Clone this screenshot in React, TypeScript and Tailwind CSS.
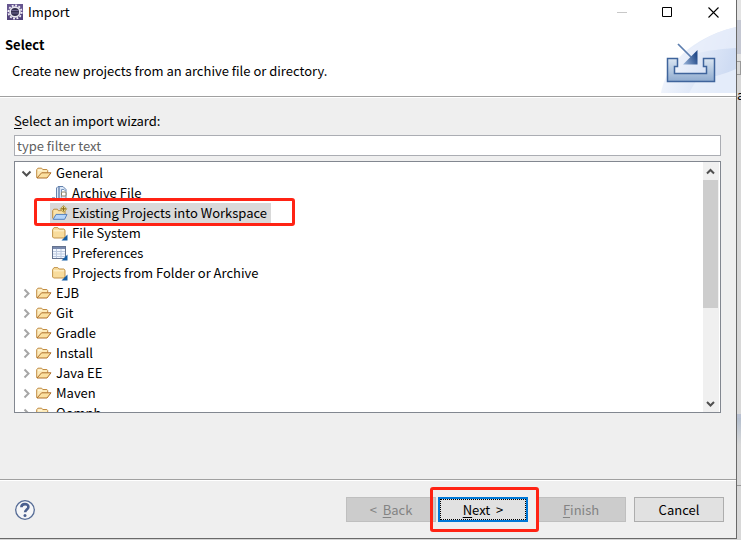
import { useState } from "react";
import type { ReactNode } from "react";

function EclipseIcon() {
  return (
    <svg width="16" height="16" viewBox="0 0 16 16" aria-hidden="true">
      <rect width="16" height="16" fill="#65558f" />
      <path d="M0 10h16v6H0z" fill="#52437a" />
      <circle cx="8" cy="8" r="6.6" fill="none" stroke="#f2f0f6" strokeWidth="1.8" strokeDasharray="1.9 1.55" />
      <circle cx="8" cy="8" r="4.9" fill="#35304f" stroke="#e8e6ee" strokeWidth="1.7" />
      <path d="M4.3 6.5h7.4M4.3 9h7.4" stroke="#6f6791" />
    </svg>
  );
}

function OpenFolderIcon() {
  return (
    <svg width="16" height="16" viewBox="0 0 16 16" aria-hidden="true">
      <path d="M.7 12.8V4.7l1.2-1.5h3.8l1 1.3h4.2l.8 1v2.3" fill="#fdeab9" stroke="#c08c42" />
      <path d="M1 13 5.6 7.8h9.4L11 13Z" fill="#fbe0a0" stroke="#b0702a" strokeLinejoin="round" />
      <path d="M2 5.2h4.2" stroke="#fff9e4" />
    </svg>
  );
}

function CornerMark() {
  return <path d="M15.5 9.5v6h-6z" fill="#165fa5" />;
}

function FolderIcon() {
  return (
    <svg width="16" height="16" viewBox="0 0 16 16" aria-hidden="true">
      <path d="M.6 12V4.5L2 2.6h3.8L7.2 4h4.6L13 5.2V12l-1 1H1.6Z" fill="#f8dc9d" stroke="#c2934a" />
      <path d="M1.5 5.8h10.6" stroke="#fff4d3" />
      <CornerMark />
    </svg>
  );
}

function PreferencesIcon() {
  return (
    <svg width="16" height="16" viewBox="0 0 16 16" aria-hidden="true">
      <rect x=".5" y="1.5" width="13" height="12" fill="#f3f8ff" stroke="#65738f" />
      <path d="M1 2h12v2H1z" fill="#7889ad" />
      <path d="M1 6.5h12M1 9h12M1 11.5h12M4.5 4v9M9 4v9" stroke="#bcc9df" />
      <CornerMark />
    </svg>
  );
}

function ArchiveIcon() {
  return (
    <svg width="16" height="16" viewBox="0 0 16 16" aria-hidden="true">
      <path d="M0 12.5h3v2H0z" fill="#165fa5" />
      <path d="M4.5 13.5V3L6 1.5h5l3 3v9z" fill="#dce8f7" stroke="#6482ad" />
      <path d="M7 2v11.5" stroke="#6482ad" strokeWidth="1.4" />
      <path d="M9.5 12.5v-8H12l1.5 1.5" fill="#fff" stroke="#7895bd" />
      <rect x="9.5" y="7" width="4.5" height="4" rx="1" fill="#fff" stroke="#8a8064" />
      <path d="M4 14.5h10" stroke="#9eb1cb" />
    </svg>
  );
}

function ImportProjectIcon() {
  return (
    <svg width="16" height="16" viewBox="0 0 16 16" aria-hidden="true">
      <path d="M.7 13.5V5.7l1.1-1.5h3.6l1 1.5H13V9" fill="#fbe3a9" stroke="#bd8a3e" />
      <path d="M1.2 14.3 4 9.4h11L12.6 14.3Z" fill="#b5d5fa" stroke="#5380be" strokeLinejoin="round" />
      <path d="M11.5.4 15 3.9l-3.5 3.5L8 3.9Z" fill="#fff3a6" stroke="#a58b3c" strokeWidth=".7" />
      <path d="M11.5 1.4v5M9 3.9h5" stroke="#8a6b1c" strokeWidth="1.3" />
    </svg>
  );
}

function ChevronIcon({ kind }: { kind: "open" | "closed" | "up" | "down" }) {
  const paths = {
    open: "M1.5 3.5l4 4 4-4",
    closed: "M3.5 1.5l4 4-4 4",
    up: "M2 7.5 5.5 4 9 7.5",
    down: "M2 4l3.5 3.5L9 4",
  };
  return (
    <svg width="11" height="11" viewBox="0 0 11 11" aria-hidden="true">
      <path d={paths[kind]} fill="none" stroke={kind === "closed" ? "#a6a6a6" : "#505050"} strokeWidth="2" />
    </svg>
  );
}

function WizardBanner() {
  return (
    <svg width="75" height="66" viewBox="0 0 75 66" className="block" aria-hidden="true">
      <defs>
        <linearGradient id="sky" x1="0" y1="0" x2="1" y2="0.3">
          <stop offset="0" stopColor="#fbfcff" />
          <stop offset="1" stopColor="#cfdcf3" />
        </linearGradient>
        <linearGradient id="tray" x1="0" y1="0" x2="0" y2="1">
          <stop offset="0" stopColor="#dbe6f2" />
          <stop offset="1" stopColor="#8fabcf" />
        </linearGradient>
        <linearGradient id="arrow" x1="0" y1="1" x2="1" y2="0.6">
          <stop offset="0" stopColor="#9db8dc" />
          <stop offset="1" stopColor="#254c8b" />
        </linearGradient>
      </defs>
      <path d="M0 66C3 48 18 14 75 0v66Z" fill="url(#sky)" />
      <path d="M22 30Q48 22 75 21V0Q43 7 22 30Z" fill="#e9effb" opacity=".75" />
      <path d="M35 54Q62 48 75 42v24H28Z" fill="#edf2fc" opacity=".7" />
      <path d="M6.5 31.5h10v8h-3v7h32v-7h-3v-8h11v23h-47Z" fill="url(#tray)" stroke="#3f649c" strokeWidth="1.5" />
      <path d="m17 17 14 14" stroke="#5c7eae" strokeWidth="1.7" />
      <path d="M36.5 23v14.5H22Z" fill="url(#arrow)" />
    </svg>
  );
}

function HelpIcon() {
  return (
    <svg width="20" height="20" viewBox="0 0 20 20" aria-hidden="true">
      <circle cx="10" cy="10" r="9.3" fill="#f5f6f8" stroke="#566c96" strokeWidth="1.3" />
      <path d="M6.4 7.3C6.4 3.2 13.4 3.1 13.4 6.9c0 2.5-3.3 2.6-3.3 5.4" fill="none" stroke="#4a5f8e" strokeWidth="2.6" />
      <circle cx="10" cy="15.4" r="1.5" fill="#4a5f8e" />
    </svg>
  );
}

const generalItems = [
  { name: "Archive File", icon: <ArchiveIcon /> },
  { name: "Existing Projects into Workspace", icon: <ImportProjectIcon />, marked: true },
  { name: "File System", icon: <FolderIcon /> },
  { name: "Preferences", icon: <PreferencesIcon /> },
  { name: "Projects from Folder or Archive", icon: <FolderIcon /> },
];

const categories = ["EJB", "Git", "Gradle", "Install", "Java EE", "Maven", "Oomph"];

function CategoryRow({ name, open }: { name: string; open?: boolean }) {
  return (
    <button type="button" aria-expanded={!!open} className="flex h-5 w-full items-center pl-1.5 text-left">
      <span className="flex w-[15px] items-center"><ChevronIcon kind={open ? "open" : "closed"} /></span>
      <OpenFolderIcon />
      <span className="pl-1">{name}</span>
    </button>
  );
}

function DialogButton({ children, disabled, focused }: { children: ReactNode; disabled?: boolean; focused?: boolean }) {
  return (
    <button
      type="button"
      disabled={disabled}
      className={
        "flex h-[25px] w-[90px] items-center justify-center " +
        (disabled
          ? "border border-[#bfbfbf] bg-[#cccccc] text-[#838383]"
          : focused
            ? "border-2 border-[#0078d7] bg-[#e1e1e1] outline-1 -outline-offset-3 outline-dotted outline-black"
            : "border border-[#adadad] bg-[#e1e1e1]")
      }
    >
      <span className="whitespace-pre">{children}</span>
    </button>
  );
}

export default function App() {
  const [selected, setSelected] = useState("Existing Projects into Workspace");
  const [filter, setFilter] = useState("");

  return (
    <div className="flex h-screen bg-[#d6d6d6] font-['Noto_Sans_CJK_SC','Noto_Sans',sans-serif] text-[13px] leading-5 text-black">
      <main className="mb-px flex min-w-0 flex-1 flex-col border-r border-b border-[#696969] bg-[#efefef]">
        <header className="border-b border-[#a0a0a0] bg-white">
          <div className="flex h-[27px] items-start justify-between">
            <h1 className="flex items-center gap-[5px] pt-0.5 pl-[7px]">
              <EclipseIcon />
              Import
            </h1>
            <div className="flex">
              <button type="button" aria-label="Minimize" disabled className="flex h-6 w-[46px] items-center justify-center">
                <svg width="11" height="11" viewBox="0 0 11 11"><path d="M0 5.5h10" stroke="#c8c8c8" /></svg>
              </button>
              <button type="button" aria-label="Maximize" className="flex h-6 w-[45px] items-center justify-center">
                <svg width="11" height="11" viewBox="0 0 11 11"><path d="M.5.5h9v9h-9z" fill="none" stroke="#000" /></svg>
              </button>
              <button type="button" aria-label="Close" className="flex h-6 w-[46px] items-center justify-center">
                <svg width="11" height="11" viewBox="0 0 11 11"><path d="m.5.5 10 10m0-10-10 10" stroke="#000" strokeWidth="1.1" /></svg>
              </button>
            </div>
          </div>
          <div className="flex h-[69px] justify-between">
            <div className="pt-2 pl-[5px]">
              <h2 className="font-bold">Select</h2>
              <p className="pt-1.5 pl-[7px]">Create new projects from an archive file or directory.</p>
            </div>
            <WizardBanner />
          </div>
        </header>

        <section className="flex min-h-0 flex-1 flex-col border-t border-b border-t-white border-b-[#a0a0a0] pt-[13px] pr-[15px] pb-[66px] pl-[14px]">
          <label htmlFor="filter" className="h-6">
            <span className="underline underline-offset-2">S</span>elect an import wizard:
          </label>
          <input
            id="filter"
            type="text"
            value={filter}
            onChange={(e) => setFilter(e.target.value)}
            placeholder="type filter text"
            className="h-[21px] w-full shrink-0 border border-[#abadb3] bg-white px-0.5 outline-none placeholder:text-[#606060]"
          />
          <div className="mt-[5px] flex min-h-0 flex-1 border border-[#828790] bg-white pr-px">
            <ul className="min-w-0 flex-1 overflow-hidden pt-px">
              <li>
                <CategoryRow name="General" open />
                <ul>
                  {generalItems.map((item) => (
                    <li key={item.name} className="relative flex h-5 pl-[35px]">
                      <button
                        type="button"
                        onClick={() => setSelected(item.name)}
                        className={"flex items-center gap-1 pr-1 pl-0.5 " + (selected === item.name ? "bg-[#d9d9d9]" : "")}
                      >
                        {item.icon}
                        {item.name}
                      </button>
                      {item.marked && (
                        <span className="pointer-events-none absolute -top-[5px] left-[19px] h-[28px] w-[261px] rounded-[3px] border-3 border-[#ff2314]" />
                      )}
                    </li>
                  ))}
                </ul>
              </li>
              {categories.map((name) => (
                <li key={name}><CategoryRow name={name} /></li>
              ))}
            </ul>
            <div className="flex w-4 flex-col items-stretch bg-[#f0f0f0] pr-px">
              <button type="button" aria-label="Scroll up" className="flex h-[18px] items-center justify-center"><ChevronIcon kind="up" /></button>
              <div className="flex-1"><div className="h-[60%] bg-[#cdcdcd]" /></div>
              <button type="button" aria-label="Scroll down" className="flex h-[18px] items-center justify-center"><ChevronIcon kind="down" /></button>
            </div>
          </div>
        </section>

        <footer className="flex h-[58px] shrink-0 items-center justify-between border-t border-white pr-3 pl-[15px]">
          <button type="button" aria-label="Help"><HelpIcon /></button>
          <div className="flex gap-2">
            <div className="flex gap-0.5">
              <DialogButton disabled>{"<  "}<span className="underline underline-offset-2">B</span>ack</DialogButton>
              <div className="relative">
                <DialogButton focused><span className="underline underline-offset-2">N</span>{"ext  >"}</DialogButton>
                <span className="pointer-events-none absolute -top-[10px] -left-2 h-[45px] w-[109px] rounded-[3px] border-3 border-[#ff2314]" />
              </div>
            </div>
            <DialogButton disabled><span className="underline underline-offset-2">F</span>inish</DialogButton>
            <DialogButton>Cancel</DialogButton>
          </div>
        </footer>
      </main>

      <aside className="mb-px flex w-1 flex-col overflow-hidden bg-[#d8d8d8]" aria-hidden="true">
        <div className="h-5 bg-[#e3e3e3]" />
        <div className="h-[34px] bg-[#c4c7d2]" />
        <div className="h-[7px] bg-[#e0e0e0]" />
        <div className="h-[14px] border-y border-r border-[#999999]" />
        <div className="h-3" />
        <span className="h-4 leading-4">a</span>
        <div className="flex-1" />
        <div className="h-1 bg-[#b9c1d2]" />
        <div className="h-[68px] border-b border-[#999999] bg-linear-to-b from-[#b4bfce] to-[#d8d8d8] to-40%" />
        <div className="h-[53px]" />
      </aside>
    </div>
  );
}
